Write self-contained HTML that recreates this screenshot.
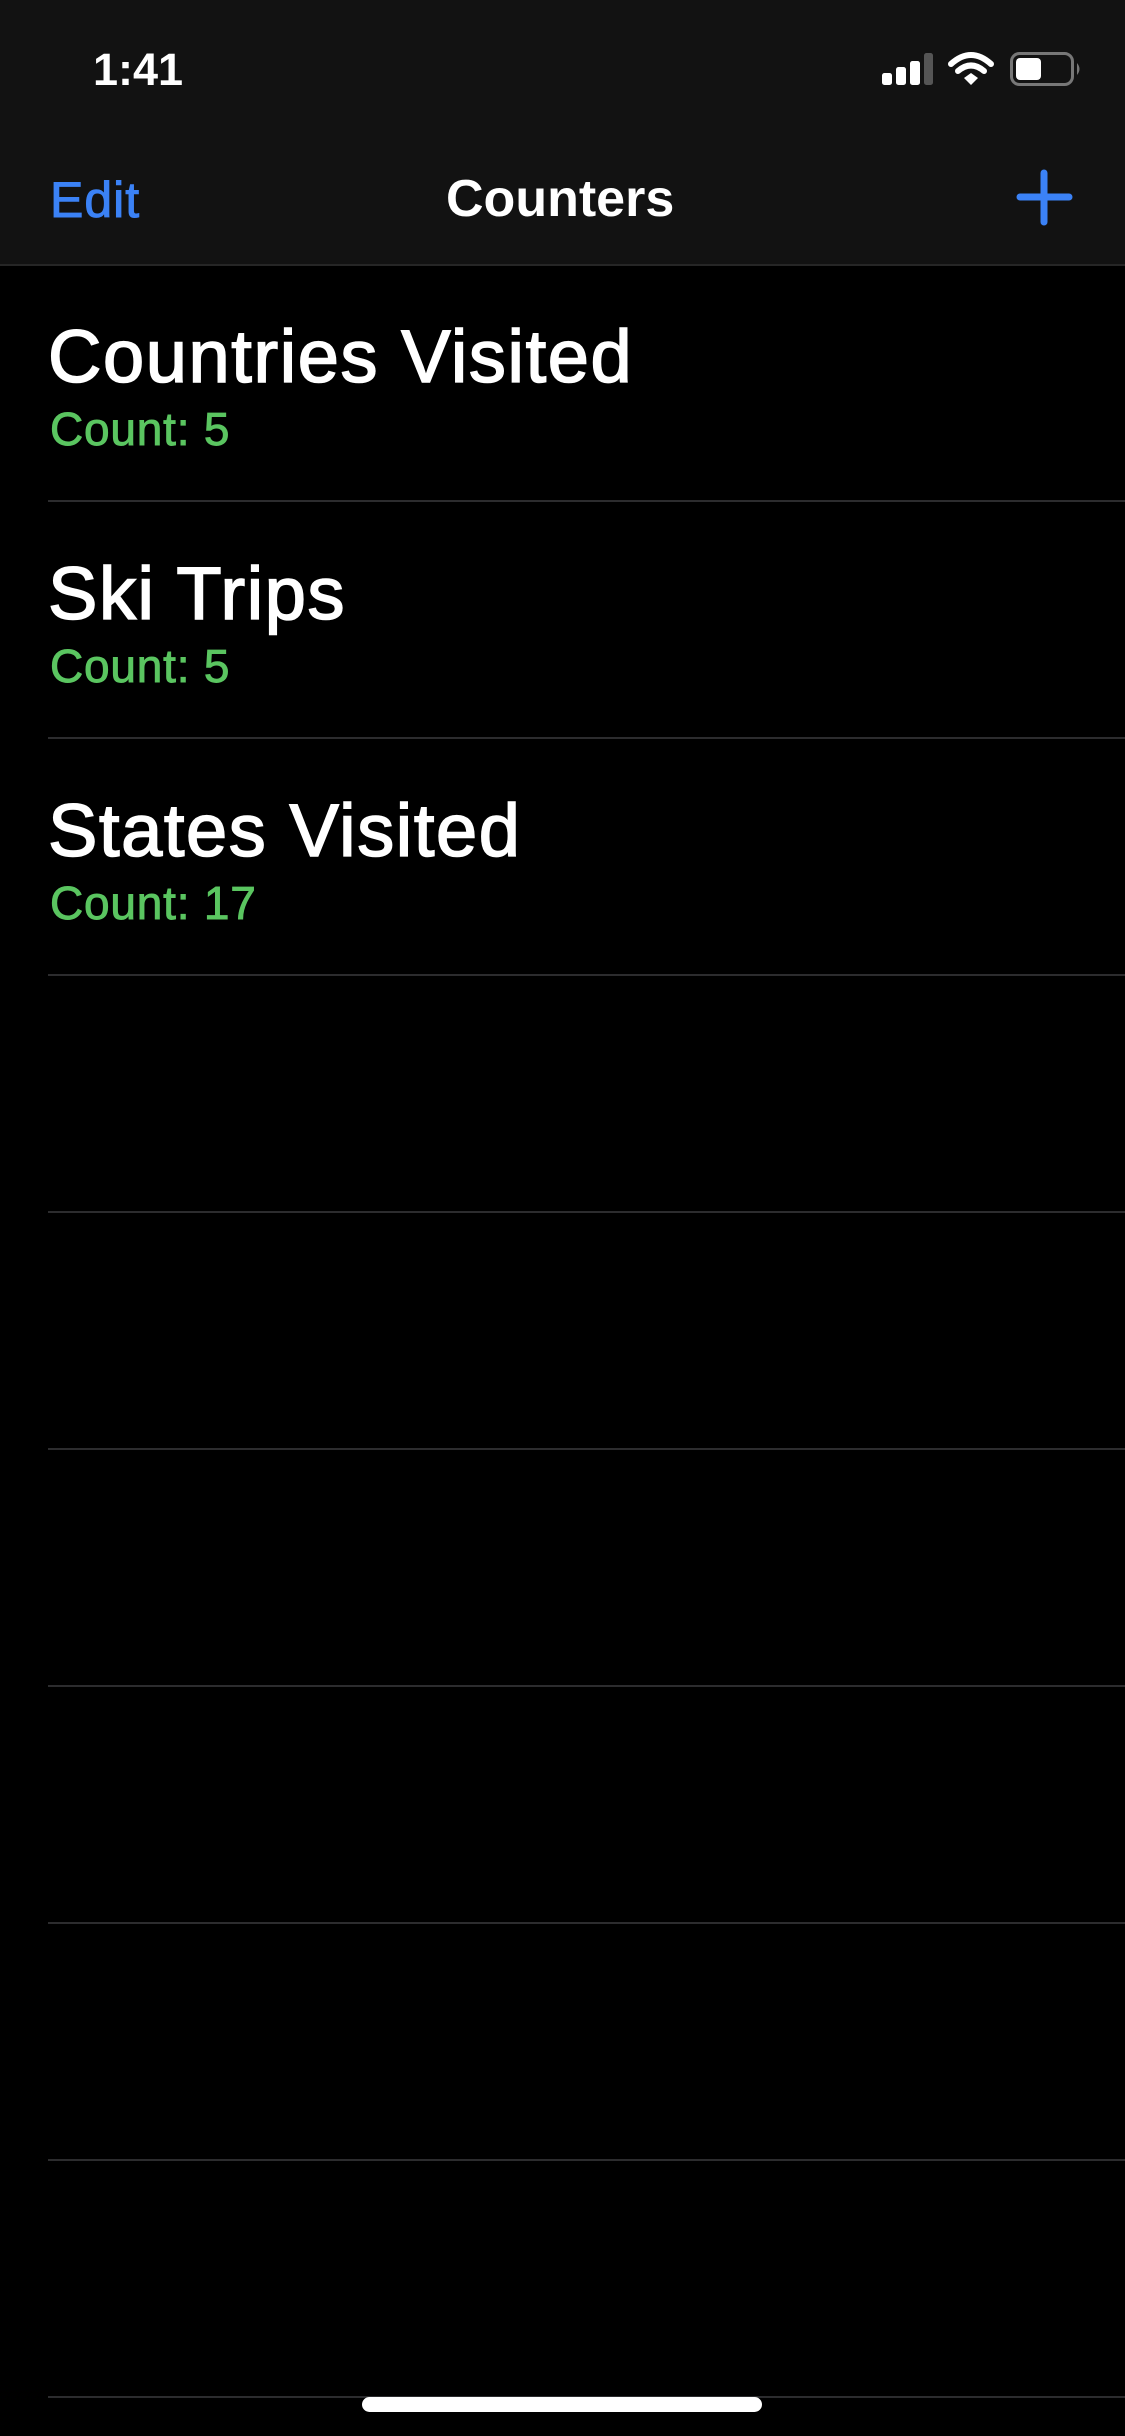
<!DOCTYPE html>
<html><head><meta charset="utf-8"><style>
html,body{margin:0;padding:0;background:#000;}
body{width:1125px;height:2436px;position:relative;overflow:hidden;font-family:"Liberation Sans",sans-serif;}
.t{position:absolute;white-space:nowrap;line-height:1;}
.sep{position:absolute;left:48px;right:0;height:2px;background:#2c2c2e;}
.title{font-size:74px;color:#fff;left:48px;letter-spacing:1.6px;-webkit-text-stroke:1.6px #fff;}
.cnt{font-size:46px;color:#5ac560;left:50px;letter-spacing:0.8px;-webkit-text-stroke:0.9px #5ac560;}
</style></head><body>
<div style="position:absolute;left:0;top:0;width:1125px;height:264px;background:#121212;"></div>
<div style="position:absolute;left:0;top:264px;width:1125px;height:2px;background:#262626;"></div>
<div class="t" style="left:93px;top:47px;font-size:45px;font-weight:bold;color:#fff;">1:41</div>
<svg style="position:absolute;left:880px;top:50px" width="205" height="40" viewBox="880 50 205 40">
<rect x="882" y="73" width="10" height="12" rx="2.5" fill="#fff"/>
<rect x="896" y="67" width="10" height="18" rx="2.5" fill="#fff"/>
<rect x="910" y="61" width="10" height="24" rx="2.5" fill="#fff"/>
<rect x="924" y="53" width="9" height="32" rx="2.5" fill="#555"/>
<path d="M951 64 Q971 46 991 64" stroke="#fff" stroke-width="6" fill="none" stroke-linecap="round"/>
<path d="M958 71 Q971 60 984 71" stroke="#fff" stroke-width="6" fill="none" stroke-linecap="round"/>
<path d="M964 78 L971 73 L978 78 L971 85 Z" fill="#fff"/>
<rect x="1011.5" y="53.5" width="61" height="31" rx="8" fill="none" stroke="#777" stroke-width="3"/>
<rect x="1016" y="58" width="25" height="22" rx="4" fill="#fff"/>
<path d="M1077 63 Q1082 69 1077 75 Z" fill="#777"/>
</svg>
<div class="t" style="left:50px;top:175px;font-size:50px;color:#3b82f6;letter-spacing:1px;-webkit-text-stroke:1px #3b82f6;">Edit</div>
<div class="t" style="left:446px;top:173px;font-size:52px;font-weight:bold;color:#fff;">Counters</div>
<svg style="position:absolute;left:1010px;top:165px" width="70" height="65">
<path d="M34 8 V57 M10 32 H59" stroke="#3b82f6" stroke-width="7" stroke-linecap="round"/>
</svg>

<div class="t title" style="top:320px;">Countries Visited</div>
<div class="t cnt" style="top:406px;">Count: 5</div>
<div class="t title" style="top:557px;">Ski Trips</div>
<div class="t cnt" style="top:643px;">Count: 5</div>
<div class="t title" style="top:794px;">States Visited</div>
<div class="t cnt" style="top:880px;">Count: 17</div>

<div class="sep" style="top:500px"></div>
<div class="sep" style="top:737px"></div>
<div class="sep" style="top:974px"></div>
<div class="sep" style="top:1211px"></div>
<div class="sep" style="top:1448px"></div>
<div class="sep" style="top:1685px"></div>
<div class="sep" style="top:1922px"></div>
<div class="sep" style="top:2159px"></div>
<div class="sep" style="top:2396px"></div>
<div style="position:absolute;left:362px;top:2397px;width:400px;height:15px;border-radius:8px;background:#fff;"></div>
</body></html>
